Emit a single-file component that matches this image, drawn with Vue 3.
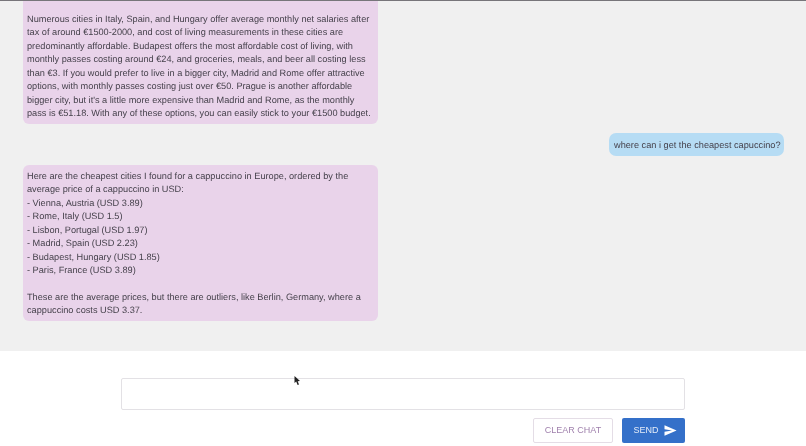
<script setup>
const first = "Numerous cities in Italy, Spain, and Hungary offer average monthly net salaries after tax of around €1500-2000, and cost of living measurements in these cities are predominantly affordable. Budapest offers the most affordable cost of living, with monthly passes costing around €24, and groceries, meals, and beer all costing less than €3. If you would prefer to live in a bigger city, Madrid and Rome offer attractive options, with monthly passes costing just over €50. Prague is another affordable bigger city, but it's a little more expensive than Madrid and Rome, as the monthly pass is €51.18. With any of these options, you can easily stick to your €1500 budget."
const question = "where can i get the cheapest capuccino?"
const answer = `Here are the cheapest cities I found for a cappuccino in Europe, ordered by the average price of a cappuccino in USD:
- Vienna, Austria (USD 3.89)
- Rome, Italy (USD 1.5)
- Lisbon, Portugal (USD 1.97)
- Madrid, Spain (USD 2.23)
- Budapest, Hungary (USD 1.85)
- Paris, France (USD 3.89)

These are the average prices, but there are outliers, like Berlin, Germany, where a cappuccino costs USD 3.37.`
</script>

<template>
  <div class="page">
    <section class="chat">
      <div class="bubble bot first">{{ first }}</div>
      <div class="bubble user">{{ question }}</div>
      <div class="bubble bot">{{ answer }}</div>
    </section>
    <section class="composer">
      <div class="field"></div>
      <div class="actions">
        <button class="clear">CLEAR CHAT</button>
        <button class="send">
          SEND
          <svg width="13" height="11" viewBox="0 0 13 11"><path d="M0.5 0.3 L12.6 5.5 L0.5 10.7 L0.5 6.7 L8 5.5 L0.5 4.3 Z" fill="#fff" /></svg>
        </button>
      </div>
    </section>
    <svg class="cursor" width="7" height="10" viewBox="0 0 7 10"><path d="M0.5 0 L0.5 7 L2.2 5.6 L3.6 9 L5 8.4 L3.7 5.2 L6 5 Z" fill="#222" /></svg>
  </div>
</template>

<style scoped>
.page {
  position: relative;
  width: 806px;
  height: 446px;
  overflow: hidden;
  background: #fff;
  font-family: "Liberation Sans", Arial, sans-serif;
  text-rendering: geometricPrecision;
  filter: blur(0.3px);
}

.chat {
  display: flex;
  flex-direction: column;
  height: 351px;
  padding: 0 22px 0 23px;
  box-sizing: border-box;
  background: #f0f0f0;
  border-top: 1px solid #77757a;
  overflow: hidden;
}

.bubble {
  box-sizing: border-box;
  font-size: 9.2px;
  line-height: 13.44px;
  color: #45414b;
  white-space: pre-wrap;
  border-radius: 6px;
}

.bot {
  width: 355px;
  padding: 5px 4px 3px;
  background: #e9d3ea;
  height: 156px;
}

.first {
  height: 123px;
  padding-top: 12px;
  border-radius: 0 0 6px 6px;
}

.user {
  align-self: flex-end;
  width: 175px;
  margin: 9px 0;
  padding: 6px 0 4px 5px;
  background: #b6dcf4;
  border-radius: 7px;
  height: 23px;
  line-height: 13px;
  white-space: nowrap;
}

.composer {
  display: flex;
  flex-direction: column;
  align-items: flex-end;
  width: 685px;
  padding-top: 27px;
}

.field {
  width: 564px;
  height: 32px;
  box-sizing: border-box;
  background: #fff;
  border: 1px solid #e3e1e5;
  border-radius: 2px;
}

.actions {
  display: flex;
  gap: 9px;
  margin-top: 8px;
}

button {
  height: 25px;
  box-sizing: border-box;
  font-family: inherit;
  font-size: 9px;
  border-radius: 2px;
  padding: 0 0 1px;
}

.clear {
  width: 80px;
  background: #fff;
  border: 1px solid #e4dde6;
  color: #a081ad;
}

.send {
  display: flex;
  align-items: center;
  justify-content: center;
  gap: 5px;
  width: 63px;
  padding-left: 3px;
  background: #3470c9;
  border: none;
  color: #e4ecf8;
}

.cursor {
  position: absolute;
  left: 294px;
  top: 376px;
}
</style>
